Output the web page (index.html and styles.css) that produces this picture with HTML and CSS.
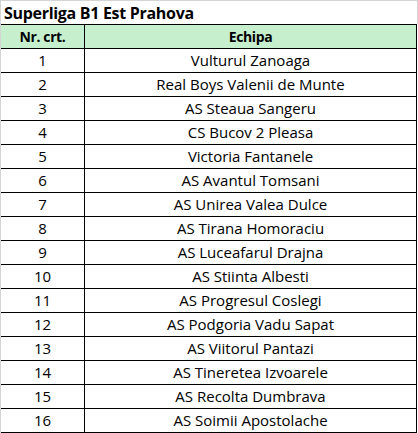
FILE: index.html
```html
<!DOCTYPE html>
<html>
<head>
<meta charset="utf-8">
<link rel="stylesheet" href="styles.css">
</head>
<body>
<div class="sheet">
  <div class="title">Superliga B1 Est Prahova</div>
  <table class="grid">
    <thead>
      <tr><th class="nr">Nr. crt.</th><th class="team">Echipa</th></tr>
    </thead>
    <tbody>
      <tr><td>1</td><td>Vulturul Zanoaga</td></tr>
      <tr><td>2</td><td>Real Boys Valenii de Munte</td></tr>
      <tr><td>3</td><td>AS Steaua Sangeru</td></tr>
      <tr><td>4</td><td>CS Bucov 2 Pleasa</td></tr>
      <tr><td>5</td><td>Victoria Fantanele</td></tr>
      <tr><td>6</td><td>AS Avantul Tomsani</td></tr>
      <tr><td>7</td><td>AS Unirea Valea Dulce</td></tr>
      <tr><td>8</td><td>AS Tirana Homoraciu</td></tr>
      <tr><td>9</td><td>AS Luceafarul Drajna</td></tr>
      <tr><td>10</td><td>AS Stiinta Albesti</td></tr>
      <tr><td>11</td><td>AS Progresul Coslegi</td></tr>
      <tr><td>12</td><td>AS Podgoria Vadu Sapat</td></tr>
      <tr><td>13</td><td>AS Viitorul Pantazi</td></tr>
      <tr><td>14</td><td>AS Tineretea Izvoarele</td></tr>
      <tr><td>15</td><td>AS Recolta Dumbrava</td></tr>
      <tr><td>16</td><td>AS Soimii Apostolache</td></tr>
    </tbody>
  </table>
</div>
</body>
</html>
```
FILE: styles.css
```css
html, body {
  margin: 0;
  padding: 0;
  background: #ffffff;
}
.sheet {
  width: 417px;
  height: 433px;
  border-left: 1px solid #d4d4d4;
  border-top: 1px solid #d4d4d4;
  font-family: "Open Sans", "Liberation Sans", sans-serif;
  font-size: 15px;
  color: #000;
  overflow: hidden;
}
.title {
  height: 23px;
  line-height: 24px;
  padding-left: 3px;
  font-weight: bold;
  font-size: 16px;
  letter-spacing: -0.3px;
  border-right: 1px solid #d4d4d4;
}
.grid {
  border-collapse: collapse;
  width: 416px;
  table-layout: fixed;
}
.grid th, .grid td {
  border: 1px solid #000;
  height: 23px;
  padding: 0;
  text-align: center;
  line-height: 23px;
}
.grid th {
  background: #c6efce;
  font-weight: bold;
  font-size: 14px;
  letter-spacing: -0.4px;
}
.grid .nr {
  width: 83px;
  border-left: none;
}
.grid td:first-child {
  border-left: none;
}
```
